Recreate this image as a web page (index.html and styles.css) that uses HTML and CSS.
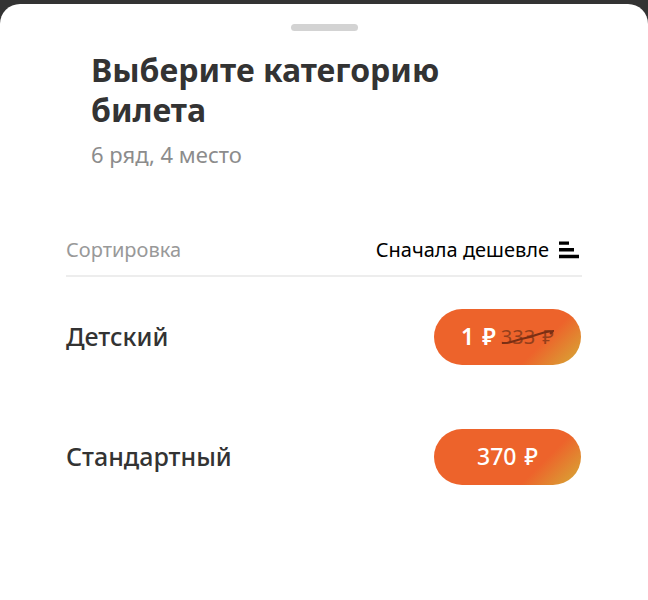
FILE: index.html
```html
<!DOCTYPE html>
<html lang="ru">
<head>
  <meta charset="UTF-8">
  <title>Категория билета</title>
  <meta name="viewport" content="width=device-width, initial-scale=1.0">
  <link rel="stylesheet" href="styles.css">
</head>
<body>
  <main class="sheet">
    <div class="handle"></div>

    <header class="header">
      <h1>Выберите категорию билета</h1>
      <p class="seat">6 ряд, 4 место</p>
    </header>

    <div class="sort">
      <span class="sort-label" id="sortLabel">Сортировка</span>
      <button type="button" class="sort-button" aria-describedby="sortLabel">
        Сначала дешевле
        <svg class="sort-icon" width="20" height="18" viewBox="0 0 20 18" aria-hidden="true">
          <path d="M0 0.5h10v3.2H0zM0 7h15v3.5H0zM0 13.7h20v3.6H0z"/>
        </svg>
      </button>
    </div>

    <ul class="tickets">
      <li class="ticket">
        <span class="ticket-name" id="child">Детский</span>
        <button type="button" class="price price-sale" aria-describedby="child">
          <span>1 <span class="currency">₽</span></span>
          <s class="old-price">333 <span class="currency">₽</span><svg class="strike" viewBox="0 0 52 16" preserveAspectRatio="none" aria-hidden="true"><path d="M1 14C8 15 14 11 24 9S38 3 51 2L48 5"/></svg></s>
        </button>
      </li>
      <li class="ticket">
        <span class="ticket-name" id="standard">Стандартный</span>
        <button type="button" class="price" aria-describedby="standard"><span>370 <span class="currency">₽</span></span></button>
      </li>
    </ul>
  </main>
</body>
</html>
```
FILE: styles.css
```css
* {
  box-sizing: border-box;
}

body {
  margin: 0;
  padding-top: 4px;
  background: #333;
  color: #333;
  font-family: "Noto Sans", sans-serif;
}

.sheet {
  min-height: calc(100vh - 4px);
  padding: 20px 66px;
  background: #fff;
  border-radius: 20px 20px 0 0;
}

.handle {
  width: 67px;
  height: 7px;
  margin: 0 auto;
  border-radius: 4px;
  background: #d3d3d3;
}

.header {
  max-width: 440px;
  margin-top: 19px;
  padding-left: 25px;
}

h1 {
  margin: 0;
  font-size: 32px;
  line-height: 40px;
  font-weight: 700;
}

.seat {
  margin: 8px 0 0;
  color: #8c8c8c;
  font-size: 22px;
  line-height: 32px;
}

.sort {
  display: flex;
  justify-content: space-between;
  align-items: center;
  margin-top: 62px;
  padding-bottom: 7px;
  border-bottom: 2px solid #ededed;
  font-size: 20px;
  line-height: 36px;
}

.sort-label {
  color: #999;
}

.sort-button {
  display: flex;
  align-items: center;
  gap: 10px;
  padding: 0 3px 0 0;
  border: none;
  background: none;
  color: #000;
  font: inherit;
  cursor: pointer;
}

.tickets {
  margin: 32px 0 0;
  padding: 0 1px 0 0;
  list-style: none;
}

.ticket {
  display: flex;
  justify-content: space-between;
  align-items: center;
  margin-bottom: 64px;
}

.ticket-name {
  padding-bottom: 2px;
  font-size: 25px;
  font-weight: 500;
}

.price {
  display: flex;
  justify-content: center;
  align-items: center;
  gap: 5px;
  width: 147px;
  height: 56px;
  padding: 0 0 2px;
  border: none;
  border-radius: 28px;
  background: linear-gradient(135deg, #ed632b 70%, #d5ad36);
  color: #fff;
  font: 500 23px "Noto Sans", sans-serif;
  cursor: pointer;
}

.price-sale {
  font-weight: 600;
}

.currency {
  margin-left: 2px;
}

.old-price {
  position: relative;
  color: #953f1b;
  font-size: 20px;
  font-weight: 400;
  text-decoration: none;
}

.strike {
  position: absolute;
  left: 0;
  top: 6px;
  width: 100%;
  height: 16px;
  fill: none;
  stroke: #7a2f14;
  stroke-width: 2;
}
```
